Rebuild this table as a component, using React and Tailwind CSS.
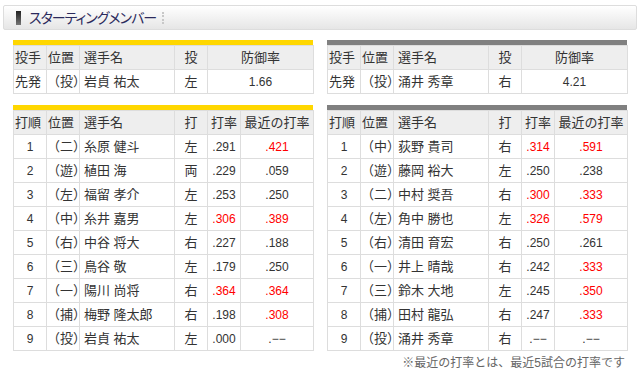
import React from "react";

const F = { fontFamily: '"Liberation Sans", "Noto Sans CJK JP", sans-serif' };

const leftP = { name: "岩貞 祐太", hand: "左", era: "1.66" };
const rightP = { name: "涌井 秀章", hand: "右", era: "4.21" };

const D = ".−−";

const leftB = [
  ["1", "（二）", "糸原 健斗", "左", ".291", false, ".421", true],
  ["2", "（遊）", "植田 海", "両", ".229", false, ".059", false],
  ["3", "（左）", "福留 孝介", "左", ".253", false, ".250", false],
  ["4", "（中）", "糸井 嘉男", "左", ".306", true, ".389", true],
  ["5", "（右）", "中谷 将大", "右", ".227", false, ".188", false],
  ["6", "（三）", "鳥谷 敬", "左", ".179", false, ".250", false],
  ["7", "（一）", "陽川 尚将", "右", ".364", true, ".364", true],
  ["8", "（捕）", "梅野 隆太郎", "右", ".198", false, ".308", true],
  ["9", "（投）", "岩貞 祐太", "左", ".000", false, D, false],
];
const rightB = [
  ["1", "（中）", "荻野 貴司", "右", ".314", true, ".591", true],
  ["2", "（遊）", "藤岡 裕大", "左", ".250", false, ".238", false],
  ["3", "（二）", "中村 奨吾", "右", ".300", true, ".333", true],
  ["4", "（左）", "角中 勝也", "左", ".326", true, ".579", true],
  ["5", "（右）", "清田 育宏", "右", ".250", false, ".261", false],
  ["6", "（一）", "井上 晴哉", "右", ".242", false, ".333", true],
  ["7", "（三）", "鈴木 大地", "左", ".245", false, ".350", true],
  ["8", "（捕）", "田村 龍弘", "右", ".247", false, ".333", true],
  ["9", "（投）", "涌井 秀章", "右", D, false, D, false],
];

const th = "border border-[#dddddd] bg-[#eeeeee] h-[24px] p-0 font-normal text-[#333]";
const td = "border border-[#dddddd] bg-white h-[24px] p-0 text-[#333]";

function Cols() {
  return (
    <colgroup>
      <col className="w-[33px]" />
      <col className="w-[33px]" />
      <col className="w-[95px]" />
      <col className="w-[33px]" />
      <col className="w-[33px]" />
      <col className="w-[73px]" />
    </colgroup>
  );
}

function PitcherTable({ p, bar }) {
  return (
    <div className="w-[300px]">
      <div className={`h-[5px] ${bar}`} />
      <table className="w-[300px] table-fixed border-collapse text-[13px] leading-none">
        <colgroup>
          <col className="w-[33px]" />
          <col className="w-[33px]" />
          <col className="w-[95px]" />
          <col className="w-[33px]" />
          <col className="w-[106px]" />
        </colgroup>
        <thead>
          <tr>
            <th className={`${th} text-left pl-[1px]`}>投手</th>
            <th className={`${th} text-left pl-[1px]`}>位置</th>
            <th className={`${th} text-left pl-[4px]`}>選手名</th>
            <th className={`${th} text-center`}>投</th>
            <th className={`${th} text-center`}>防御率</th>
          </tr>
        </thead>
        <tbody>
          <tr>
            <td className={`${td} text-left pl-[1px]`}>先発</td>
            <td className={`${td} text-left`}>（投）</td>
            <td className={`${td} text-left pl-[4px] text-[#0066a6]`}>{p.name}</td>
            <td className={`${td} text-center`}>{p.hand}</td>
            <td className={`${td} text-center text-[12px]`}>{p.era}</td>
          </tr>
        </tbody>
      </table>
    </div>
  );
}

function BatterTable({ rows, bar }) {
  return (
    <div className="w-[300px]">
      <div className={`h-[5px] ${bar}`} />
      <table className="w-[300px] table-fixed border-collapse text-[13px] leading-none">
        <Cols />
        <thead>
          <tr>
            <th className={`${th} text-left pl-[1px]`}>打順</th>
            <th className={`${th} text-left pl-[1px]`}>位置</th>
            <th className={`${th} text-left pl-[4px]`}>選手名</th>
            <th className={`${th} text-center`}>打</th>
            <th className={`${th} text-center`}>打率</th>
            <th className={`${th} text-center`}>最近の打率</th>
          </tr>
        </thead>
        <tbody>
          {rows.map((r) => (
            <tr key={r[0]}>
              <td className={`${td} text-center text-[12px]`}>{r[0]}</td>
              <td className={`${td} text-left`}>{r[1]}</td>
              <td className={`${td} text-left pl-[4px] text-[#0066a6]`}>{r[2]}</td>
              <td className={`${td} text-center`}>{r[3]}</td>
              <td className={`${td} text-center text-[12px] ${r[5] ? "text-[#ff0000]" : ""}`}>{r[4]}</td>
              <td className={`${td} text-center text-[12px] ${r[7] ? "text-[#ff0000]" : ""}`}>{r[6]}</td>
            </tr>
          ))}
        </tbody>
      </table>
    </div>
  );
}

export default function App() {
  return (
    <div className="w-[641px] h-[386px] bg-white overflow-hidden" style={F}>
      <div className="ml-[3px] mt-[5px] w-[634px] h-[25px] border border-[#dddddd] rounded-[2px] bg-gradient-to-b from-white to-[#e6e6e6] flex items-center">
        <div className="ml-[12px] w-[5px] h-[14px] bg-gradient-to-b from-[#222] to-[#777]" />
        <div className="ml-[8px] text-[14px] text-[#2b2a5c] tracking-[-1px] leading-none [font-feature-settings:'palt']">
          スターティングメンバー
        </div>
        <div className="ml-[6px] h-[12px] border-l-2 border-dotted border-[#c8c8c8]" />
      </div>
      <div className="mt-[10px] ml-[13px] flex gap-[14px]">
        <PitcherTable p={leftP} bar="bg-[#ffd700]" />
        <PitcherTable p={rightP} bar="bg-[#808080]" />
      </div>
      <div className="mt-[11px] ml-[13px] flex gap-[14px]">
        <BatterTable rows={leftB} bar="bg-[#ffd700]" />
        <BatterTable rows={rightB} bar="bg-[#808080]" />
      </div>
      <div className="w-[625px] text-right text-[12px] text-[#666] mt-[6px] leading-none">
        ※最近の打率とは、最近5試合の打率です
      </div>
    </div>
  );
}
